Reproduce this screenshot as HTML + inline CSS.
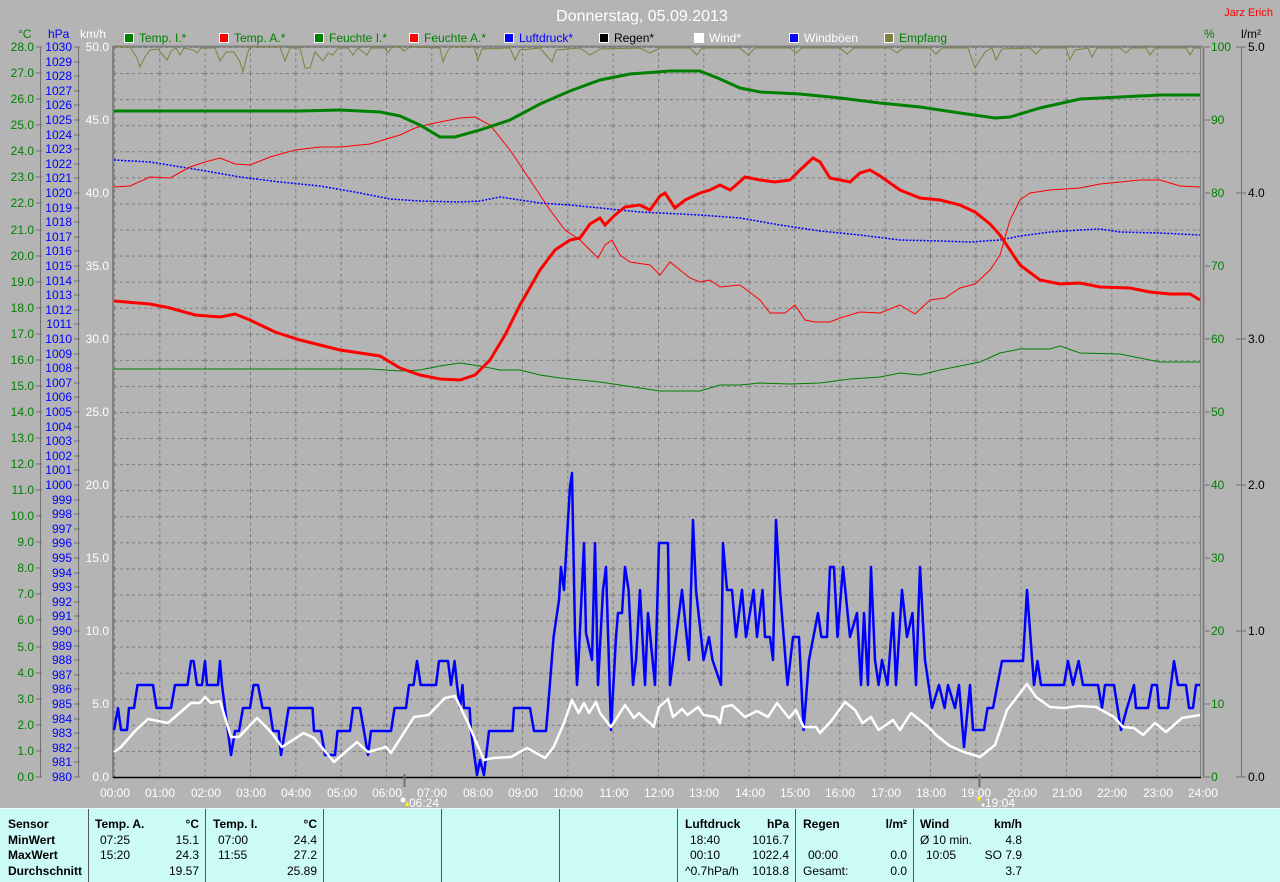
<!DOCTYPE html>
<html><head><meta charset="utf-8"><style>
html,body{margin:0;padding:0;background:#b4b4b4;}
body{width:1280px;height:881px;overflow:hidden;position:relative;font-family:"Liberation Sans",sans-serif;}
svg{position:absolute;left:0;top:0;}
svg text{font-family:"Liberation Sans",sans-serif;font-size:12px;}
#tbl{position:absolute;left:0;top:808px;width:1280px;height:73px;background:#ccfaf6;border-top:1px solid #e8fffe;}
.sep{position:absolute;top:0;width:1px;height:73px;background:#555;}
.t{position:absolute;font-size:12px;color:#000;white-space:nowrap;line-height:14px;}
.b{font-weight:bold;}
.r{text-align:right;}
</style></head><body>
<svg width="1280" height="808" viewBox="0 0 1280 808">
<defs>
<pattern id="g" x="114" y="47" width="45.333" height="26.071" patternUnits="userSpaceOnUse">
<line x1="0" y1="0.5" x2="45.333" y2="0.5" stroke="#7a7a7a" stroke-width="1" stroke-dasharray="3,3"/>
<line x1="0.5" y1="0" x2="0.5" y2="26.071" stroke="#7a7a7a" stroke-width="1" stroke-dasharray="3,3"/>
</pattern>
</defs>
<rect x="114" y="47" width="1087" height="730" fill="url(#g)"/>
<text x="642" y="21" fill="#fff" text-anchor="middle" style="font-size:16px">Donnerstag, 05.09.2013</text>
<text x="1273" y="16" fill="#f00" text-anchor="end" style="font-size:11px">Jarz Erich</text>
<text x="18" y="38" fill="#008000">°C</text>
<text x="48" y="38" fill="#00f">hPa</text>
<text x="80" y="38" fill="#fff">km/h</text>
<text x="1204" y="38" fill="#008000">%</text>
<text x="1241" y="38" fill="#000">l/m²</text>
<g stroke="#fff" stroke-width="1">
<rect x="124.5" y="33.5" width="9" height="9" fill="#008000"/>
<rect x="219.5" y="33.5" width="9" height="9" fill="#f00"/>
<rect x="314.5" y="33.5" width="9" height="9" fill="#008000"/>
<rect x="409.5" y="33.5" width="9" height="9" fill="#f00"/>
<rect x="504.5" y="33.5" width="9" height="9" fill="#00f"/>
<rect x="599.5" y="33.5" width="9" height="9" fill="#000"/>
<rect x="694.5" y="33.5" width="9" height="9" fill="#fff"/>
<rect x="789.5" y="33.5" width="9" height="9" fill="#00f"/>
<rect x="884.5" y="33.5" width="9" height="9" fill="#808040"/>
</g>
<g style="font-size:11px">
<text x="139" y="42" fill="#008000">Temp. I.*</text>
<text x="234" y="42" fill="#008000">Temp. A.*</text>
<text x="329" y="42" fill="#008000">Feuchte I.*</text>
<text x="424" y="42" fill="#008000">Feuchte A.*</text>
<text x="519" y="42" fill="#00f">Luftdruck*</text>
<text x="614" y="42" fill="#000">Regen*</text>
<text x="709" y="42" fill="#fff">Wind*</text>
<text x="804" y="42" fill="#fff">Windböen</text>
<text x="899" y="42" fill="#008000">Empfang</text>
</g>
<g stroke="#707070" stroke-width="1" fill="none">
<line x1="40.5" y1="47" x2="40.5" y2="777"/>
<line x1="78.5" y1="47" x2="78.5" y2="777"/>
<line x1="1241.5" y1="47" x2="1241.5" y2="777"/>
</g>
<line x1="113" y1="46" x2="113" y2="778" stroke="#808080" stroke-width="2"/>
<line x1="113" y1="46.5" x2="1202" y2="46.5" stroke="#808080" stroke-width="2"/>
<line x1="1200.5" y1="46" x2="1200.5" y2="778" stroke="#808080" stroke-width="1"/>
<line x1="1203.5" y1="46" x2="1203.5" y2="778" stroke="#808080" stroke-width="2"/>
<line x1="113" y1="777.5" x2="1201" y2="777.5" stroke="#000" stroke-width="1.5"/>
<g stroke="#707070"><path d="M36 47h6M36 73h6M36 99h6M36 125h6M36 151h6M36 177h6M36 203h6M36 230h6M36 256h6M36 282h6M36 308h6M36 334h6M36 360h6M36 386h6M36 412h6M36 438h6M36 464h6M36 490h6M36 516h6M36 542h6M36 568h6M36 594h6M36 620h6M36 647h6M36 673h6M36 699h6M36 725h6M36 751h6M36 777h6"/>
<path d="M74 47h6M74 62h6M74 76h6M74 91h6M74 105h6M74 120h6M74 135h6M74 149h6M74 164h6M74 178h6M74 193h6M74 208h6M74 222h6M74 237h6M74 251h6M74 266h6M74 281h6M74 295h6M74 310h6M74 324h6M74 339h6M74 354h6M74 368h6M74 383h6M74 397h6M74 412h6M74 427h6M74 441h6M74 456h6M74 470h6M74 485h6M74 500h6M74 514h6M74 529h6M74 543h6M74 558h6M74 573h6M74 587h6M74 602h6M74 616h6M74 631h6M74 646h6M74 660h6M74 675h6M74 689h6M74 704h6M74 719h6M74 733h6M74 748h6M74 762h6M74 777h6"/>
<path d="M1205 47h5M1205 120h5M1205 193h5M1205 266h5M1205 339h5M1205 412h5M1205 485h5M1205 558h5M1205 631h5M1205 704h5M1205 777h5"/>
<path d="M1236 47h10M1236 193h10M1236 339h10M1236 485h10M1236 631h10M1236 777h10"/></g>
<g fill="#008000" text-anchor="end">
<text x="34" y="51">28.0</text><text x="34" y="77">27.0</text><text x="34" y="103">26.0</text><text x="34" y="129">25.0</text><text x="34" y="155">24.0</text><text x="34" y="181">23.0</text><text x="34" y="207">22.0</text><text x="34" y="234">21.0</text><text x="34" y="260">20.0</text><text x="34" y="286">19.0</text><text x="34" y="312">18.0</text><text x="34" y="338">17.0</text><text x="34" y="364">16.0</text><text x="34" y="390">15.0</text><text x="34" y="416">14.0</text><text x="34" y="442">13.0</text><text x="34" y="468">12.0</text><text x="34" y="494">11.0</text><text x="34" y="520">10.0</text><text x="34" y="546">9.0</text><text x="34" y="572">8.0</text><text x="34" y="598">7.0</text><text x="34" y="624">6.0</text><text x="34" y="651">5.0</text><text x="34" y="677">4.0</text><text x="34" y="703">3.0</text><text x="34" y="729">2.0</text><text x="34" y="755">1.0</text><text x="34" y="781">0.0</text>
</g>
<g fill="#00f" text-anchor="end">
<text x="72" y="51">1030</text><text x="72" y="66">1029</text><text x="72" y="80">1028</text><text x="72" y="95">1027</text><text x="72" y="109">1026</text><text x="72" y="124">1025</text><text x="72" y="139">1024</text><text x="72" y="153">1023</text><text x="72" y="168">1022</text><text x="72" y="182">1021</text><text x="72" y="197">1020</text><text x="72" y="212">1019</text><text x="72" y="226">1018</text><text x="72" y="241">1017</text><text x="72" y="255">1016</text><text x="72" y="270">1015</text><text x="72" y="285">1014</text><text x="72" y="299">1013</text><text x="72" y="314">1012</text><text x="72" y="328">1011</text><text x="72" y="343">1010</text><text x="72" y="358">1009</text><text x="72" y="372">1008</text><text x="72" y="387">1007</text><text x="72" y="401">1006</text><text x="72" y="416">1005</text><text x="72" y="431">1004</text><text x="72" y="445">1003</text><text x="72" y="460">1002</text><text x="72" y="474">1001</text><text x="72" y="489">1000</text><text x="72" y="504">999</text><text x="72" y="518">998</text><text x="72" y="533">997</text><text x="72" y="547">996</text><text x="72" y="562">995</text><text x="72" y="577">994</text><text x="72" y="591">993</text><text x="72" y="606">992</text><text x="72" y="620">991</text><text x="72" y="635">990</text><text x="72" y="650">989</text><text x="72" y="664">988</text><text x="72" y="679">987</text><text x="72" y="693">986</text><text x="72" y="708">985</text><text x="72" y="723">984</text><text x="72" y="737">983</text><text x="72" y="752">982</text><text x="72" y="766">981</text><text x="72" y="781">980</text>
</g>
<g fill="#fff" text-anchor="end">
<text x="109" y="51">50.0</text><text x="109" y="124">45.0</text><text x="109" y="197">40.0</text><text x="109" y="270">35.0</text><text x="109" y="343">30.0</text><text x="109" y="416">25.0</text><text x="109" y="489">20.0</text><text x="109" y="562">15.0</text><text x="109" y="635">10.0</text><text x="109" y="708">5.0</text><text x="109" y="781">0.0</text>
</g>
<g fill="#008000">
<text x="1211" y="51">100</text><text x="1211" y="124">90</text><text x="1211" y="197">80</text><text x="1211" y="270">70</text><text x="1211" y="343">60</text><text x="1211" y="416">50</text><text x="1211" y="489">40</text><text x="1211" y="562">30</text><text x="1211" y="635">20</text><text x="1211" y="708">10</text><text x="1211" y="781">0</text>
</g>
<g fill="#000">
<text x="1248" y="51">5.0</text><text x="1248" y="197">4.0</text><text x="1248" y="343">3.0</text><text x="1248" y="489">2.0</text><text x="1248" y="635">1.0</text><text x="1248" y="781">0.0</text>
</g>
<g fill="#fff" text-anchor="middle">
<text x="115" y="797">00:00</text><text x="160" y="797">01:00</text><text x="206" y="797">02:00</text><text x="251" y="797">03:00</text><text x="296" y="797">04:00</text><text x="342" y="797">05:00</text><text x="387" y="797">06:00</text><text x="432" y="797">07:00</text><text x="478" y="797">08:00</text><text x="523" y="797">09:00</text><text x="568" y="797">10:00</text><text x="614" y="797">11:00</text><text x="659" y="797">12:00</text><text x="704" y="797">13:00</text><text x="750" y="797">14:00</text><text x="795" y="797">15:00</text><text x="840" y="797">16:00</text><text x="886" y="797">17:00</text><text x="931" y="797">18:00</text><text x="976" y="797">19:00</text><text x="1022" y="797">20:00</text><text x="1067" y="797">21:00</text><text x="1112" y="797">22:00</text><text x="1158" y="797">23:00</text><text x="1203" y="797">24:00</text>
</g>
<line x1="404.5" y1="774" x2="404.5" y2="787" stroke="#707070" stroke-width="2"/>
<line x1="979.5" y1="774" x2="979.5" y2="787" stroke="#707070" stroke-width="2"/>
<circle cx="403" cy="800" r="2.5" fill="#fff"/><path d="M405 806l2-5 2 5z" fill="#ff0"/>
<text x="409" y="807" fill="#fff">06:24</text>
<path d="M977 797l2 5 2-5z" fill="#ff0"/><circle cx="983" cy="805" r="1.5" fill="#fff"/>
<text x="985" y="807" fill="#fff">19:04</text>
<polyline fill="none" stroke="#808040" stroke-width="1" points="114,47 130,47 137,58 140,67 145,57 150,50 158,49 163,55 167,60 171,51 176,48 180,55 184,48 193,50 197,53 201,48 215,48 220,61 226,52 234,52 240,62 243,72 247,55 250,47 280,47 285,61 290,48 300,48 305,68 310,68 315,52 323,61 328,53 333,55 338,48 348,48 353,55 358,48 363,52 367,55 371,48 385,48 388,53 392,47 400,47 404,51 410,47 440,48 443,62 447,52 451,47 474,47 478,60 482,49 510,48 515,60 520,50 540,48 546,55 552,62 556,50 580,48 590,55 600,49 640,48 650,53 660,48 690,48 697,55 702,48 740,48 748,55 755,48 790,48 796,53 802,48 840,48 847,54 854,48 890,48 897,53 903,48 930,48 936,54 942,48 968,48 975,68 980,60 985,52 992,48 996,60 1002,49 1030,48 1036,54 1042,48 1066,48 1070,60 1075,50 1088,48 1092,57 1097,48 1120,48 1126,53 1131,48 1146,48 1150,55 1155,48 1186,48 1190,55 1194,48 1200,48"/>
<polyline fill="none" stroke="#0000ff" stroke-width="1.5" stroke-dasharray="2,1.5" points="114,160 150,162 200,170 240,177 280,182 320,186 360,193 390,199 420,201 460,202 480,201 500,197 540,203 570,205 600,208 640,212 660,213 700,215 740,218 780,225 820,231 860,235 900,240 940,241 970,242 1000,240 1020,236 1050,232 1080,230 1100,229 1120,232 1160,233 1200,235"/>
<polyline fill="none" stroke="#008000" stroke-width="1" points="114,369 370,369 400,371 420,370 440,366 460,363 480,366 500,370 520,370 540,375 560,378 600,382 640,388 660,391 700,391 720,385 740,385 760,383 790,384 820,383 850,379 880,377 900,373 920,375 940,370 960,366 980,362 1000,353 1020,349 1050,349 1060,346 1080,353 1120,354 1140,358 1160,362 1200,362"/>
<polyline fill="none" stroke="#ff0000" stroke-width="1" points="114,187 130,186 150,177 170,178 190,167 205,162 220,158 235,164 250,165 270,157 295,150 320,147 340,147 370,144 400,135 415,128 430,124 460,118 475,117 490,125 510,150 530,180 550,210 565,230 580,240 590,250 598,258 605,245 612,240 620,255 630,262 650,265 660,275 670,262 680,270 690,278 700,282 710,280 720,287 740,285 760,300 770,313 785,313 795,305 805,320 815,322 830,322 840,318 860,312 880,313 900,305 915,314 930,300 945,298 960,288 975,284 990,270 1000,255 1010,220 1020,200 1030,193 1050,190 1080,188 1100,184 1120,182 1140,180 1160,180 1180,186 1200,187"/>
<polyline fill="none" stroke="#008000" stroke-width="3" points="114,111 300,111 340,110 380,112 400,116 420,125 440,137 455,137 480,130 510,120 540,104 570,91 600,80 630,74 670,71 700,71 720,79 740,88 760,92 800,94 840,98 880,103 920,107 960,113 995,118 1010,117 1040,108 1080,99 1120,97 1160,95 1200,95"/>
<polyline fill="none" stroke="#ff0000" stroke-width="3" points="114,301 150,304 170,308 195,315 220,317 235,314 250,320 275,332 300,340 320,345 340,350 380,356 400,368 420,375 440,379 460,380 475,375 490,360 505,335 520,305 540,270 555,250 570,240 580,238 590,224 600,218 605,225 615,215 625,207 640,205 650,210 660,196 665,193 675,208 685,200 700,193 710,190 720,185 730,190 735,186 745,177 760,180 775,182 790,180 800,170 813,158 820,162 830,178 850,182 860,173 870,170 880,176 900,190 920,198 940,200 960,205 975,212 990,224 1000,235 1010,250 1020,265 1040,280 1060,284 1080,283 1100,287 1130,288 1150,292 1170,294 1190,294 1200,300"/>
<polyline fill="none" stroke="#0000ff" stroke-width="2.5" stroke-linejoin="round" points="114,730 118,708 121,730 127,730 129,708 134,708 137.5,685 153,685 156.5,708 171,708 175,685 187.5,685 191,661 193.6,661 197,685 202,685 205,661 207,685 218,685 220,661 222,685 231,755 235,731 239,731 243,708 250,708 253.6,685 258,685 262.5,708 269.6,708 273,731 278.6,731 281,755 285,731 288.6,708 312.5,708 314,731 321,731 325,755 335,755 337.5,731 350,731 353,708 360,708 364,731 368,755 371,731 391,731 394.6,708 406,708 409,685 413.6,685 417,661 420.7,685 436,685 439,661 448,661 451,685 454.6,661 457,685 460,708 462.5,685 464,708 469.6,708 471,731 477,775 480,760 484,775 489,731 512.5,731 514,708 530,708 534,731 546,731 548,708 553.6,637 559,600 561,567 564,590 568,520 570,487 572,473 573,527 575,633 577,685 578.6,660 584,543 586,633 592,660 595,543 598,685 603,590 606,567 611,730 616,637 618,613 622,613 625,567 628.6,590 633,685 636,660 640,590 645,685 648,613 655,685 659,543 668,543 670,685 682,590 689,660 693,520 696,590 703.6,660 709,637 712.5,660 721,685 723,543 727,590 732,590 736,637 742,590 746,637 753.6,590 757,637 762.5,590 765,637 770,637 773,660 776,520 780,590 787.5,685 793,637 799,637 803.6,730 809,660 818,613 821.4,637 827,637 830,567 834,567 837.5,637 843,567 850,637 857,613 861,685 864,613 868,685 871,567 875,660 878.6,685 882,660 887.5,685 893,613 896,685 902,590 907,637 912.5,613 916,685 920,567 925,660 932,708 939,685 944.6,708 948,685 955,708 959,685 964,747 970,685 973,730 984,730 987.5,708 993,708 1002,661 1023,661 1027,590 1034,685 1037.5,661 1041,685 1064,685 1068,661 1073,685 1078.6,661 1083,685 1098,685 1102,708 1105,685 1114,685 1121,730 1127,708 1134,685 1136,708 1148,708 1152,685 1157,685 1159,708 1168,708 1174,661 1178,685 1186,685 1189,708 1193,708 1196,685 1200,685"/>
<polyline fill="none" stroke="#ffffff" stroke-width="2.5" stroke-linejoin="round" points="114,752 121,747 136,730 148,719 168,723 191,703 200,703 205,697 211,703 220,701 231,737 239,737 257,718 271,732 282,747 303.6,733 314,738 334,762 357,742 368,752 386,747 391,753 414,717 428.6,715 445,698 455,696 468,723 484,760 493,758 511,757 527,748 545,758 553.6,747 564,723 572,700 578.6,713 584,703 589,713 596,702 600,713 611,727 625,705 634,718 639,713 646,720 650,723 653.6,727 659,707 668,699 673,717 682,709 687.5,715 698,707 703.6,715 716,717 720,723 723,707 732,705 745,717 757,711 768,717 777,703 789,718 796,710 803.6,727 816,727 820,733 832,720 845,702 855,710 862.5,723 871,717 878.6,730 893,720 900,730 911,713 928.6,727 936,735 950,746 964,752 980,757 995,745 1007,710 1027,684 1036,697 1050,707 1064,708 1078.6,706 1096,707 1114,717 1123,727 1134,728 1143,735 1155,723 1166,732 1182,718 1200,715"/>
</svg>
<div id="tbl">
<div class="sep" style="left:88px"></div><div class="sep" style="left:205px"></div><div class="sep" style="left:323px"></div><div class="sep" style="left:441px"></div><div class="sep" style="left:559px"></div><div class="sep" style="left:677px"></div><div class="sep" style="left:795px"></div><div class="sep" style="left:913px"></div>
<div class="t b" style="left:8px;top:8px">Sensor</div>
<div class="t b" style="left:8px;top:24px">MinWert</div>
<div class="t b" style="left:8px;top:39px">MaxWert</div>
<div class="t b" style="left:8px;top:55px">Durchschnitt</div>
<div class="t b" style="left:95px;top:8px">Temp. A.</div><div class="t b r" style="left:160px;width:39px;top:8px">°C</div>
<div class="t" style="left:100px;top:24px">07:25</div><div class="t r" style="left:150px;width:49px;top:24px">15.1</div>
<div class="t" style="left:100px;top:39px">15:20</div><div class="t r" style="left:150px;width:49px;top:39px">24.3</div>
<div class="t r" style="left:150px;width:49px;top:55px">19.57</div>
<div class="t b" style="left:213px;top:8px">Temp. I.</div><div class="t b r" style="left:280px;width:37px;top:8px">°C</div>
<div class="t" style="left:218px;top:24px">07:00</div><div class="t r" style="left:260px;width:57px;top:24px">24.4</div>
<div class="t" style="left:218px;top:39px">11:55</div><div class="t r" style="left:260px;width:57px;top:39px">27.2</div>
<div class="t r" style="left:260px;width:57px;top:55px">25.89</div>
<div class="t b" style="left:685px;top:8px">Luftdruck</div><div class="t b r" style="left:740px;width:49px;top:8px">hPa</div>
<div class="t" style="left:690px;top:24px">18:40</div><div class="t r" style="left:730px;width:59px;top:24px">1016.7</div>
<div class="t" style="left:690px;top:39px">00:10</div><div class="t r" style="left:730px;width:59px;top:39px">1022.4</div>
<div class="t" style="left:685px;top:55px">^0.7hPa/h</div><div class="t r" style="left:730px;width:59px;top:55px">1018.8</div>
<div class="t b" style="left:803px;top:8px">Regen</div><div class="t b r" style="left:860px;width:47px;top:8px">l/m²</div>
<div class="t" style="left:808px;top:39px">00:00</div><div class="t r" style="left:860px;width:47px;top:39px">0.0</div>
<div class="t" style="left:803px;top:55px">Gesamt:</div><div class="t r" style="left:860px;width:47px;top:55px">0.0</div>
<div class="t b" style="left:920px;top:8px">Wind</div><div class="t b r" style="left:970px;width:52px;top:8px">km/h</div>
<div class="t" style="left:920px;top:24px">Ø 10 min.</div><div class="t r" style="left:970px;width:52px;top:24px">4.8</div>
<div class="t" style="left:926px;top:39px">10:05</div><div class="t r" style="left:970px;width:52px;top:39px">SO 7.9</div>
<div class="t r" style="left:970px;width:52px;top:55px">3.7</div>
</div>
</body></html>
